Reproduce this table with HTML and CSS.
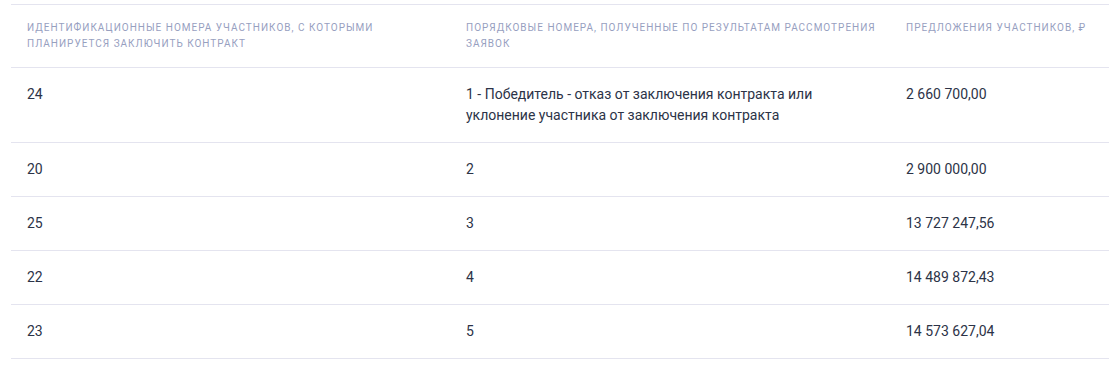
FILE: index.html
```html
<!DOCTYPE html>
<html lang="ru">
<head>
<meta charset="utf-8">
<title>Участники</title>
<link rel="stylesheet" href="styles.css">
</head>
<body>
<div class="wrap">
  <table class="results">
    <colgroup>
      <col class="c1"><col class="c2"><col class="c3">
    </colgroup>
    <thead>
      <tr>
        <th>Идентификационные номера участников, с которыми планируется заключить контракт</th>
        <th>Порядковые номера, полученные по результатам рассмотрения заявок</th>
        <th>Предложения участников, ₽</th>
      </tr>
    </thead>
    <tbody>
      <tr><td>24</td><td>1 - Победитель - отказ от заключения контракта или уклонение участника от заключения контракта</td><td>2 660 700,00</td></tr>
      <tr><td>20</td><td>2</td><td>2 900 000,00</td></tr>
      <tr><td>25</td><td>3</td><td>13 727 247,56</td></tr>
      <tr><td>22</td><td>4</td><td>14 489 872,43</td></tr>
      <tr><td>23</td><td>5</td><td>14 573 627,04</td></tr>
    </tbody>
  </table>
</div>
</body>
</html>
```
FILE: styles.css
```css
html, body {
  margin: 0;
  padding: 0;
  background: #ffffff;
}
.wrap {
  overflow: hidden;
  padding: 4px 0 0 11px;
}
.results {
  width: 1320px;
  table-layout: fixed;
  border-collapse: collapse;
  font-family: Roboto, "Liberation Sans", sans-serif;
}
.c1 { width: 439px; }
.c2 { width: 440px; }
.c3 { width: 441px; }
.results th {
  text-align: left;
  vertical-align: top;
  font-weight: 400;
  font-size: 10px;
  line-height: 16px;
  letter-spacing: 1px;
  text-transform: uppercase;
  color: #97a0bf;
  padding: 15px 4px 15px 16px;
  border-top: 1px solid #e4e4ef;
  border-bottom: 1px solid #e4e4ef;
}
.results td {
  vertical-align: top;
  font-size: 14px;
  line-height: 21px;
  color: #2c3347;
  padding: 16px 16px;
  border-bottom: 1px solid #e4e4ef;
}
.results td:nth-child(2) {
  padding-right: 70px;
}
```
